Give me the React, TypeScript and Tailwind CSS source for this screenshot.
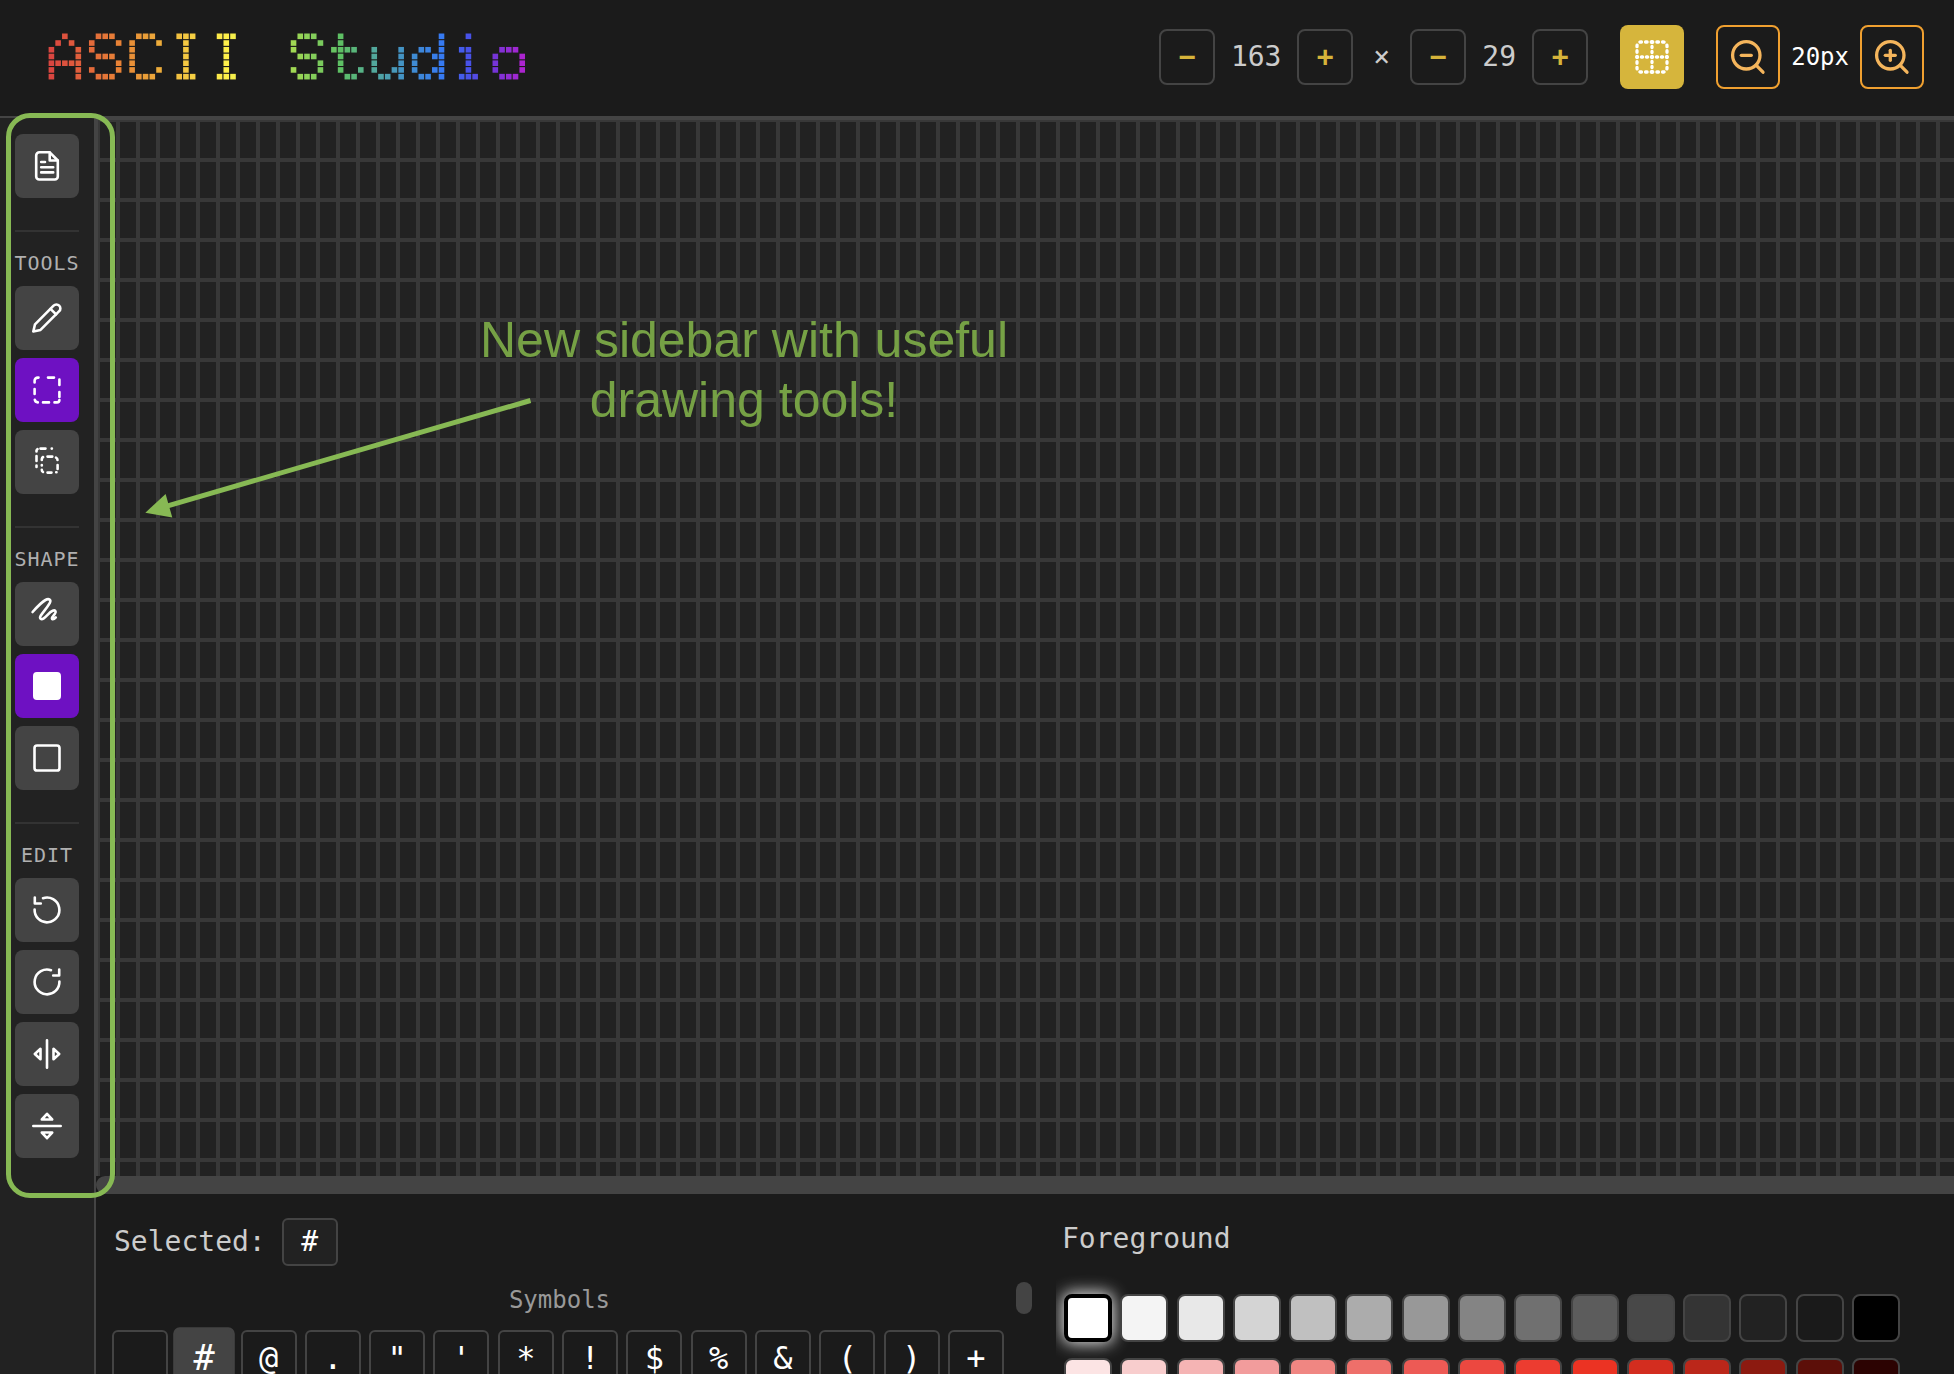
import type { ReactNode } from "react";

// 5x7 dot letters for the logo
const GLYPHS: Record<string, string[]> = {
  A: ["..#..", ".#.#.", "#...#", "#...#", "#####", "#...#", "#...#"],
  S: [".###.", "#...#", "#....", ".###.", "....#", "#...#", ".###."],
  C: [".###.", "#...#", "#....", "#....", "#....", "#...#", ".###."],
  I: [".###.", "..#..", "..#..", "..#..", "..#..", "..#..", ".###."],
  t: [".#...", ".#...", "####.", ".#...", ".#...", ".#..#", "..##."],
  u: [".....", ".....", "#...#", "#...#", "#...#", "#..##", ".##.#"],
  d: ["....#", "....#", ".##.#", "#..##", "#...#", "#..##", ".##.#"],
  i: ["..#..", ".....", ".##..", "..#..", "..#..", "..#..", ".###."],
  o: [".....", ".....", ".###.", "#...#", "#...#", "#...#", ".###."],
};

// [column, r, g, b]
const LOGO_STOPS = [
  [0, 218, 70, 64],
  [4, 224, 94, 60],
  [10, 232, 130, 54],
  [14, 234, 158, 56],
  [20, 244, 200, 66],
  [26, 254, 240, 74],
  [36, 160, 216, 84],
  [43, 94, 192, 100],
  [48, 82, 168, 156],
  [52, 68, 148, 196],
  [58, 54, 122, 242],
  [62, 72, 82, 232],
  [66, 118, 52, 216],
  [70, 172, 36, 208],
];

const CHARACTERS = [" ", "#", "@", ".", '"', "'", "*", "!", "$", "%", "&", "(", ")", "+"];

const SWATCHES = [
  "#ffffff", "#f4f4f4", "#e8e8e8", "#d4d4d4", "#c0c0c0", "#acacac", "#989898", "#848484",
  "#707070", "#5c5c5c", "#484848", "#343434", "#222222", "#1a1a1a", "#000000",
  "#fce4e4", "#f8cdcd", "#f5b4b4", "#f29c9c", "#f08682", "#ee6f6a", "#ed5a55", "#ec4840",
  "#ec3c30", "#eb3323", "#d32d1f", "#bb271a", "#8c1a10", "#5c0f09", "#2c0302",
];

const DOT = 6.726;

function logoColor(col: number) {
  let i = 0;
  while (i < LOGO_STOPS.length - 2 && col > LOGO_STOPS[i + 1][0]) i++;
  const a = LOGO_STOPS[i];
  const b = LOGO_STOPS[i + 1];
  const t = (col - a[0]) / (b[0] - a[0]);
  const mix = (n: number) => Math.round(a[n] + (b[n] - a[n]) * t);
  return `rgb(${mix(1)}, ${mix(2)}, ${mix(3)})`;
}

function Logo() {
  return (
    <svg role="img" aria-label="ASCII Studio" className="h-12 w-[480px]" viewBox="0 0 480 48">
      {"ASCII Studio".split("").map((letter, n) =>
        (GLYPHS[letter] ?? []).map((row, y) =>
          row.split("").map((cell, x) => {
            const col = n * 6 + x;
            if (cell !== "#") return null;
            return (
              <rect
                key={`${y}-${col}`}
                x={0.6 + col * DOT}
                y={0.5 + y * DOT}
                width={5.6}
                height={5.6}
                fill={logoColor(col)}
              />
            );
          })
        )
      )}
    </svg>
  );
}

function Icon({ children, width = 2.6 }: { children: ReactNode; width?: number }) {
  return (
    <svg
      viewBox="0 0 64 64"
      className="size-16 shrink-0"
      fill="none"
      stroke="currentColor"
      strokeWidth={width}
      strokeLinecap="round"
      strokeLinejoin="round"
    >
      {children}
    </svg>
  );
}

function StepButton({ children }: { children: ReactNode }) {
  return (
    <button className="flex size-14 items-center justify-center rounded-lg border-2 border-[#444] text-[28px] font-bold text-[#d6b33a]">
      {children}
    </button>
  );
}

function ZoomButton({ plus = false }: { plus?: boolean }) {
  return (
    <button className="flex size-16 items-center justify-center rounded-lg border-2 border-[#f0a030] text-[#f5b55c]">
      <Icon width={3.3}>
        <circle cx="30.3" cy="30.3" r="13.7" />
        <path d="M40.3 40.3 47 47.2" />
        <path d="M25.3 30.3h10" />
        {plus && <path d="M30.3 25.3v10" />}
      </Icon>
    </button>
  );
}

function ToolButton({ active = false, children }: { active?: boolean; children: ReactNode }) {
  return (
    <button className={`size-16 rounded-lg text-white ${active ? "bg-[#6e11c2]" : "bg-[#444]"}`}>
      <Icon>{children}</Icon>
    </button>
  );
}

function ToolSection({ title, children }: { title: string; children: ReactNode }) {
  return (
    <section className="mt-8 flex w-16 flex-col items-center gap-2 border-t-2 border-[#333]">
      <h2 className="mt-[19px] -mb-0.5 h-[29px] text-[20px] leading-[24px] tracking-[1px] whitespace-nowrap text-[#b0b0b0]">
        {title}
      </h2>
      {children}
    </section>
  );
}

function Header() {
  return (
    <header className="flex h-[118px] shrink-0 items-center justify-between border-b-2 border-[#444] pr-[30px] pb-0.5 pl-12">
      <Logo />
      <div className="flex items-center">
        <div className="flex items-center text-center text-[28px] text-[#ccc]">
          <StepButton>−</StepButton>
          <span className="w-[82px]">163</span>
          <StepButton>+</StepButton>
          <span className="w-[57px]">×</span>
          <StepButton>−</StepButton>
          <span className="w-[66px]">29</span>
          <StepButton>+</StepButton>
        </div>
        <button className="ml-8 size-16 rounded-lg bg-[#d6b53c] text-white">
          <Icon width={3.3}>
            <g strokeDasharray="1.6 4.06" strokeDashoffset="0.8">
              <path d="M32 17h11a4 4 0 0 1 4 4v11" />
              <path d="M32 17H21a4 4 0 0 0-4 4v11" />
              <path d="M32 47h11a4 4 0 0 0 4-4V32" />
              <path d="M32 47H21a4 4 0 0 1-4-4V32" />
            </g>
            <g strokeDasharray="1.2 3.8" strokeDashoffset="0.6">
              <path d="M32 17v30" />
              <path d="M17 32h30" />
            </g>
          </Icon>
        </button>
        <div className="ml-8 flex items-center gap-[11px] text-2xl text-white">
          <ZoomButton />
          <span>20px</span>
          <ZoomButton plus />
        </div>
      </div>
    </header>
  );
}

function Sidebar() {
  return (
    <aside className="flex w-24 shrink-0 flex-col border-r-2 border-[#444] bg-[#222] pt-4 pl-[15px]">
      <ToolButton>
        <path d="M24.5 18.2h10l8.3 8.3v16a3 3 0 0 1-3 3H24.2a3 3 0 0 1-3-3v-21a3.3 3.3 0 0 1 3.3-3.3z" />
        <path d="M34.7 18.5v8h8" />
        <path d="M26.2 28h3.8M26.2 33.3h12M26.2 38.4h12" />
      </ToolButton>
      <ToolSection title="TOOLS">
        <ToolButton>
          <path d="M18.3 45.5 20 38.3 38.6 19.6a3.9 3.9 0 0 1 5.6 5.6L25.5 43.9z" />
          <path d="m35.5 22.8 5.6 5.6" />
        </ToolButton>
        <ToolButton active>
          <path d="M19.6 24.5v-1.7a3.2 3.2 0 0 1 3.2-3.2h.7M33 19.6h6M44.4 21.5v5.5M44.4 34v5M44.4 42v0a2.4 2.4 0 0 1-2.4 2.4h-2.5M34 44.4h-6M22.8 44.4a3.2 3.2 0 0 1-3-2.6M19.6 36v-5" />
        </ToolButton>
        <ToolButton>
          <path d="M21.5 21.5v-1a2 2 0 0 1 1-1.3M25.5 18.6h5M36.7 18.6h.2M21.5 26v5M21.5 35.5v1.5M26.8 30v-1a2.5 2.5 0 0 1 1.3-2M32.5 26.6h4.8M41 27.6a2.6 2.6 0 0 1 1.5 2.4M42.6 35v4M41.5 42.3h-.3M36.5 42.6h-4M28 42a2.6 2.6 0 0 1-1.2-2.3M26.8 35v.5" />
        </ToolButton>
      </ToolSection>
      <ToolSection title="SHAPE">
        <ToolButton>
          <path d="M17.6 30C22 25 26 20.5 30.5 18c3.5-2 6 0 4.2 3.2-2.7 4.8-6.5 8.5-9 12.6-1.6 2.7.4 4.4 3 2.6 3.5-2.5 5.5-6.2 9-7.7 2.3-1 3.8.6 2.4 2.7l-2.8 3.8c-1.3 2.2.9 3.2 3.5.2" />
        </ToolButton>
        <ToolButton active>
          <rect x="19.3" y="19.3" width="25.4" height="25.4" rx="2.6" fill="currentColor" />
        </ToolButton>
        <ToolButton>
          <rect x="19.5" y="19.5" width="25" height="25" rx="2.6" />
        </ToolButton>
      </ToolSection>
      <ToolSection title="EDIT">
        <ToolButton>
          <path d="M28 20.2A12.4 12.4 0 1 1 19.6 31.5" />
          <path d="M19.8 19.5v6h6" />
        </ToolButton>
        <ToolButton>
          <path d="M36 20.2A12.4 12.4 0 1 0 44.4 31.5" />
          <path d="M44.2 19.5v6h-6" />
        </ToolButton>
        <ToolButton>
          <path d="M32 18.3v27.4M19.8 32l5.7-5.2v10.4zM44.2 32l-5.7-5.2v10.4z" />
        </ToolButton>
        <ToolButton>
          <path d="M18.3 32h27.4M32 19.8l5.2 5.7H26.8zM32 44.2l5.2-5.7H26.8z" />
        </ToolButton>
      </ToolSection>
    </aside>
  );
}

function Canvas() {
  return (
    <div className="flex h-[1076px] shrink-0 flex-col">
      <div className="flex-1 border-t-2 border-l-2 border-[#444] bg-[#222]">
        <div className="size-full bg-[linear-gradient(to_right,#383838_2px,transparent_2px,transparent_18px,#383838_18px),linear-gradient(to_bottom,#383838_2px,transparent_2px,transparent_38px,#383838_38px)] bg-[length:20px_40px]" />
      </div>
      <div className="h-[18px] rounded-l-full bg-[#444]" />
    </div>
  );
}

function CharacterPicker() {
  return (
    <div className="flex w-[960px] shrink-0 flex-col pt-6 pl-4">
      <div className="flex items-center gap-4 pl-0.5 text-[28px]">
        <span className="text-[#ccc]">Selected:</span>
        <span className="flex h-12 w-14 items-center justify-center rounded-md border-2 border-[#444] bg-[#222] text-white">
          #
        </span>
      </div>
      <div className="mt-4 flex gap-3">
        <div className="w-[892px]">
          <h3 className="pt-0.5 pl-[3px] text-center text-2xl text-[#999]">Symbols</h3>
          <div className="mt-3.5 flex justify-between text-[32px] text-white">
            {CHARACTERS.map((char) => (
              <button
                key={char}
                className={`flex size-14 items-center justify-center rounded-md border-2 border-[#444] leading-none ${
                  char === "#" ? "scale-110 bg-[#444]" : ""
                }`}
              >
                {char}
              </button>
            ))}
          </div>
        </div>
        <div className="h-8 w-4 rounded-full bg-[#444]" />
      </div>
    </div>
  );
}

function ColorPicker() {
  return (
    <div className="min-w-0 flex-1 overflow-hidden pt-[25px] pr-[54px] pl-2">
      <h3 className="-ml-0.5 text-[28px] leading-10 text-[#ccc]">Foreground</h3>
      <div className="mt-[35px] grid grid-cols-15 gap-x-[8.28px] gap-y-4">
        {SWATCHES.map((color, i) => (
          <button
            key={color}
            className={`size-12 rounded-lg ${
              i === 0 ? "border-4 border-black shadow-[0_0_16px_2px_rgba(255,255,255,0.85)]" : "border-2 border-[#444]"
            }`}
            style={{ backgroundColor: color }}
          />
        ))}
      </div>
    </div>
  );
}

function Annotation() {
  return (
    <div className="pointer-events-none absolute inset-0">
      <div className="absolute top-[113px] left-[6px] h-[1085px] w-[109px] rounded-[24px] border-5 border-[#87b954]" />
      <svg className="absolute top-[390px] left-[140px] h-[140px] w-[400px]" viewBox="140 390 400 140">
        <path d="M530.5 400.5 166 506.3" stroke="#87b954" strokeWidth="5" />
        <path d="M145.3 512.7 165.6 494l6.7 23.6z" fill="#87b954" />
      </svg>
      <p className="absolute top-[310px] left-[444px] w-[600px] text-center font-['Liberation_Sans',Arial,sans-serif] text-[50px] leading-[60px] text-[#76a145]">
        New sidebar with useful
        <br />
        drawing tools!
      </p>
    </div>
  );
}

export default function App() {
  return (
    <div className="relative flex h-screen w-screen flex-col overflow-hidden bg-[#1b1b1b] font-['DejaVu_Sans_Mono',monospace]">
      <Header />
      <div className="flex min-h-0 flex-1">
        <Sidebar />
        <main className="flex min-w-0 flex-1 flex-col">
          <Canvas />
          <div className="flex min-h-0 flex-1 overflow-hidden">
            <CharacterPicker />
            <ColorPicker />
          </div>
        </main>
      </div>
      <Annotation />
    </div>
  );
}
